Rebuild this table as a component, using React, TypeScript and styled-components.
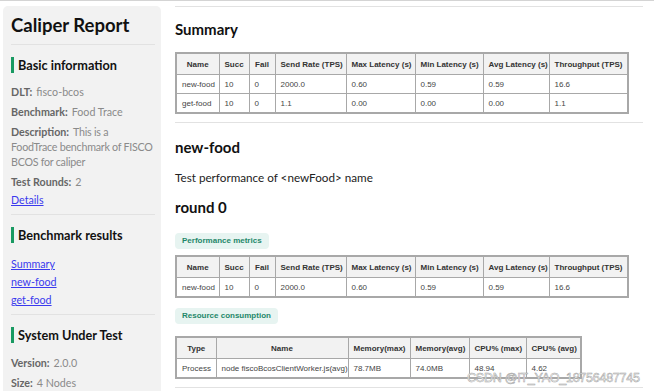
import styled, {createGlobalStyle} from "styled-components";

const Global = createGlobalStyle`
  html, body {
    margin: 0;
    padding: 0;
    background: #fff;
    overflow: hidden;
  }
  body {
    width: 654px;
    height: 391px;
    font-family: Lato, "Noto Sans", sans-serif;
  }
`;

const Page = styled.div`
  position: relative;
  display: flex;
  align-items: flex-start;
  height: 390px;
  border-top: 1px solid #d4d4d4;
  padding-left: 3px;
  overflow: hidden;
`;

const Sidebar = styled.aside`
  flex: 0 0 158px;
  box-sizing: border-box;
  margin-top: 5px;
  height: 420px;
  padding: 6px 2px 0 8px;
  background: #f2f2f2;
  border-radius: 5px;
`;

const Title = styled.h1`
  margin: 0;
  font-size: 18.5px;
  line-height: 26px;
  font-weight: 700;
  color: #111;
`;

const Rule = styled.hr<{$m?: string}>`
  border: 0;
  border-top: 1px solid #e2e2e2;
  margin: ${(p) => p.$m || "0"};
`;

const SideRule = styled(Rule)`
  margin-right: 4px;
`;

const Gap = styled.div<{$h: number}>`
  height: ${(p) => p.$h}px;
`;

const SideHeading = styled.h3`
  margin: 0;
  display: flex;
  align-items: center;
  gap: 4px;
  font-size: 12.7px;
  line-height: 18px;
  font-weight: 700;
  color: #111;

  &::before {
    content: "";
    width: 3px;
    height: 16px;
    background: #1a9a62;
  }
`;

const InfoList = styled.div`
  display: flex;
  flex-direction: column;
  gap: 5px;
  font-size: 10.7px;
  line-height: 15px;
  color: #8a8a8a;
`;

const Desc = styled.div`
  white-space: nowrap;
  letter-spacing: -0.25px;
`;

const Label = styled.b`
  color: #666;
  margin-right: 4px;
  letter-spacing: 0;
`;

const SideLink = styled.a`
  color: #3a3aee;
  text-decoration: underline;
`;

const LinkList = styled.div`
  display: flex;
  flex-direction: column;
  gap: 3px;
  font-size: 10.7px;
  line-height: 15px;
`;

const DetailsRow = styled.div`
  margin-top: -2px;
`;

const Main = styled.main`
  flex: 0 0 468px;
  margin-left: 14px;
  padding-top: 5px;
`;

const H2 = styled.h2`
  margin: 0;
  font-size: 15px;
  line-height: 22px;
  font-weight: 700;
  color: #111;
`;

const Para = styled.p`
  margin: 0;
  font-size: 11.7px;
  line-height: 18px;
  color: #222;
`;

const Badge = styled.div`
  width: fit-content;
  padding: 0 7px;
  height: 16px;
  line-height: 16px;
  border-radius: 4px;
  background: #e7f4f1;
  color: #1f876a;
  font-family: "Liberation Sans", Arial, sans-serif;
  font-size: 8px;
  font-weight: 700;
`;

const Table = styled.table`
  border-collapse: collapse;
  table-layout: fixed;
  border: 2px solid #a8a8a8;
  font-family: "Liberation Sans", Arial, sans-serif;
  font-size: 8px;
  color: #444;

  th, td {
    border: 1px solid #a8a8a8;
    padding: 0 5px;
    white-space: nowrap;
    overflow: hidden;
  }

  th {
    height: 20px;
    background: #f2f2f2;
    font-weight: 700;
    color: #333;
    text-align: center;
  }

  td {
    height: 18px;
    text-align: left;
  }
`;

const Watermark = styled.div`
  position: absolute;
  left: 467px;
  top: 370px;
  font-family: "Liberation Sans", Arial, sans-serif;
  font-size: 12.6px;
  letter-spacing: -0.3px;
  color: #fff;
  -webkit-text-stroke: 0.5px #a0a0a0;
  pointer-events: none;
`;

type Row = (string | number)[];

const DataTable = ({widths, head, rows}: {widths: number[]; head: string[]; rows: Row[]}) => (
    <Table style={{width: widths.reduce((a, b) => a + b, 0)}}>
        <colgroup>
            {widths.map((w, i) => <col key={i} style={{width: w}}/>)}
        </colgroup>
        <thead>
        <tr>{head.map((h) => <th key={h}>{h}</th>)}</tr>
        </thead>
        <tbody>
        {rows.map((r, i) => (
            <tr key={i}>{r.map((c, j) => <td key={j}>{c}</td>)}</tr>
        ))}
        </tbody>
    </Table>
);

const perfHead = ["Name", "Succ", "Fail", "Send Rate (TPS)", "Max Latency (s)", "Min Latency (s)", "Avg Latency (s)", "Throughput (TPS)"];
const perfWidths = [43, 30, 26, 71, 69, 68, 66, 79];

const App = () => {
    return (
        <Page>
            <Global/>
            <Sidebar>
                <Title>Caliper Report</Title>
                <SideRule $m="6px 0 11px"/>
                <SideHeading>Basic information</SideHeading>
                <Gap $h={10}/>
                <InfoList>
                    <div><Label>DLT:</Label>fisco-bcos</div>
                    <div><Label>Benchmark:</Label>Food Trace</div>
                    <Desc><Label>Description:</Label>This is a<br/>FoodTrace benchmark of FISCO<br/>BCOS for caliper</Desc>
                    <div><Label>Test Rounds:</Label>2</div>
                    <DetailsRow><SideLink href="#">Details</SideLink></DetailsRow>
                </InfoList>
                <SideRule $m="7px 0 11px"/>
                <SideHeading>Benchmark results</SideHeading>
                <Gap $h={12}/>
                <LinkList>
                    <SideLink href="#">Summary</SideLink>
                    <SideLink href="#">new-food</SideLink>
                    <SideLink href="#">get-food</SideLink>
                </LinkList>
                <SideRule $m="7px 0 11px"/>
                <SideHeading>System Under Test</SideHeading>
                <Gap $h={11}/>
                <InfoList>
                    <div><Label>Version:</Label>2.0.0</div>
                    <div><Label>Size:</Label>4 Nodes</div>
                </InfoList>
            </Sidebar>
            <Main>
                <Rule $m="0 0 11px"/>
                <H2>Summary</H2>
                <Gap $h={12}/>
                <DataTable widths={perfWidths} head={perfHead} rows={[
                    ["new-food", 10, 0, "2000.0", "0.60", "0.59", "0.59", "16.6"],
                    ["get-food", 10, 0, "1.1", "0.00", "0.00", "0.00", "1.1"],
                ]}/>
                <Rule $m="8px 0 13px"/>
                <H2>new-food</H2>
                <Gap $h={10}/>
                <Para>Test performance of &lt;newFood&gt; name</Para>
                <Gap $h={10}/>
                <H2>round 0</H2>
                <Gap $h={15}/>
                <Badge>Performance metrics</Badge>
                <Gap $h={6}/>
                <DataTable widths={perfWidths} head={perfHead} rows={[
                    ["new-food", 10, 0, "2000.0", "0.60", "0.59", "0.59", "16.6"],
                ]}/>
                <Gap $h={10}/>
                <Badge>Resource consumption</Badge>
                <Gap $h={12}/>
                <DataTable
                    widths={[40, 132, 62, 59, 57, 55]}
                    head={["Type", "Name", "Memory(max)", "Memory(avg)", "CPU% (max)", "CPU% (avg)"]}
                    rows={[["Process", "node fiscoBcosClientWorker.js(avg)", "78.7MB", "74.0MB", "48.94", "4.62"]]}
                />
                <Rule $m="8px 0 0"/>
            </Main>
            <Watermark>CSDN @IT_YAO_18756487745</Watermark>
        </Page>
    );
};

export default App;
